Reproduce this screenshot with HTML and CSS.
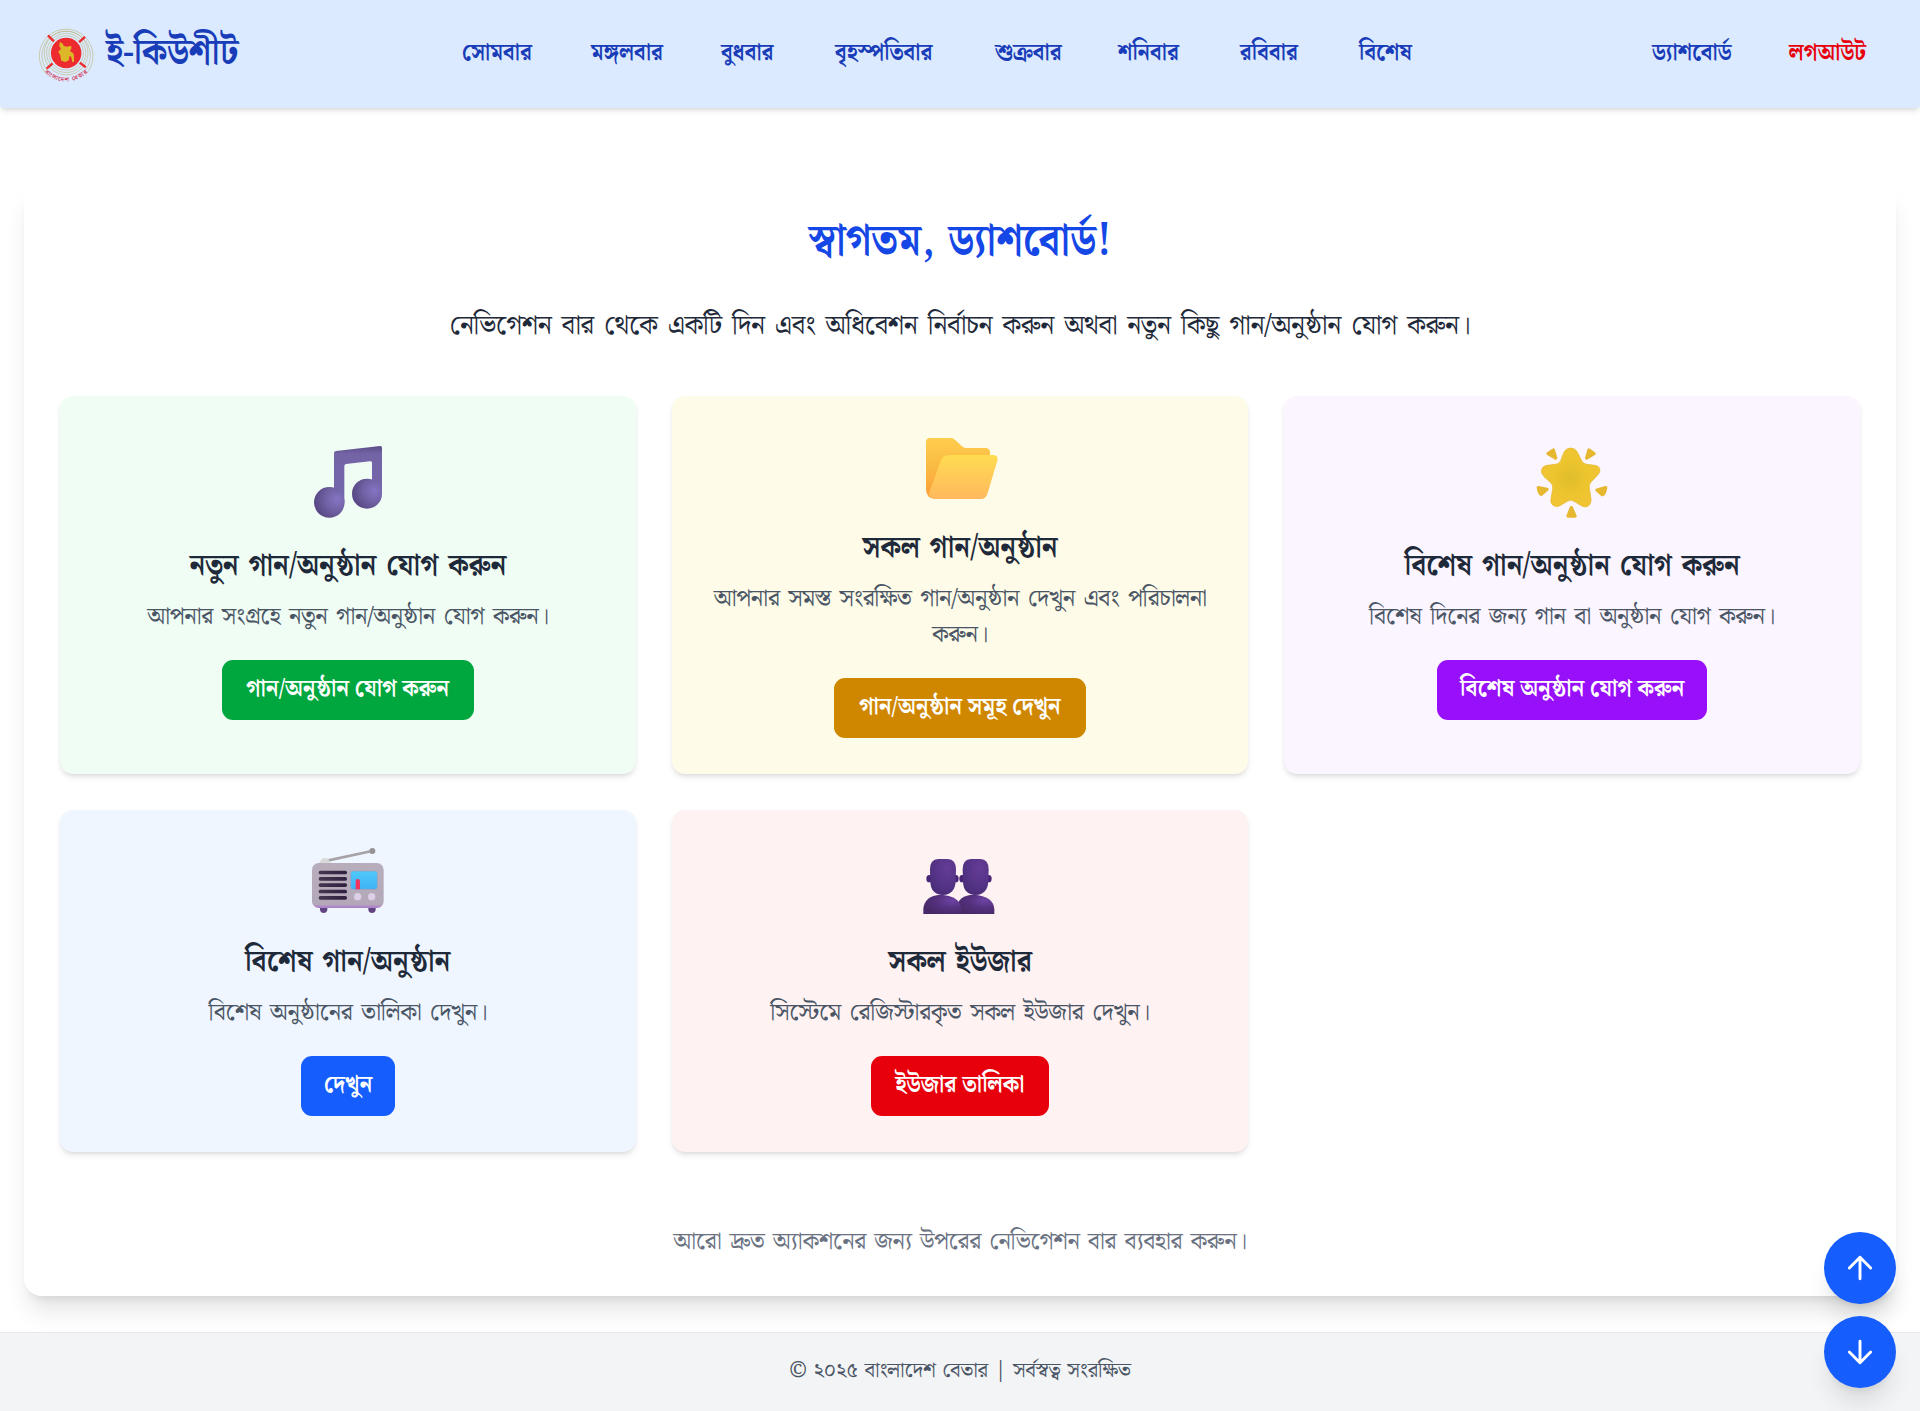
FILE: index.html
```html
<!DOCTYPE html>
<html lang="bn">
<head>
<meta charset="utf-8">
<title>ই-কিউশীট</title>
<link rel="stylesheet" href="styles.css">
</head>
<body>
<header class="navbar">
  <a class="brand">
    <svg class="brand-logo" viewBox="54 44 172 180" width="57" height="60">
      <g fill="none" stroke="#b9b274" stroke-width="1.7">
        <path d="M76 191A81 81 0 1 1 202 191"/>
        <path d="M82 184A73 73 0 1 1 196 184"/>
        <circle cx="139" cy="131" r="66"/><circle cx="139" cy="131" r="59"/><circle cx="139" cy="131" r="52"/>
      </g>
      <g stroke="#ed2a2e" stroke-width="7"><path d="M84 78l18 18M196 82l-18 16M80 178l18-16M198 174l-18-14"/></g>
      <circle cx="139" cy="131" r="46" fill="#ed2a2e"/>
      <path fill="#dcb728" d="M120 98l8 4 4 8 10 2 12-3 1 8-5 8 7 4 5 6 1 22-5 3-4-18-5-2-2 13-10 5-13-4-3-17-6-10 8-8-5-10z"/>
      <path id="logoArc" d="M74 190Q138 246 206 188" fill="none"/>
      <text class="logo-text"><textPath href="#logoArc" textLength="144">বাংলাদেশ বেতার</textPath></text>
    </svg>
    <span class="brand-name">ই-কিউশীট</span>
  </a>
  <nav class="days">
    <a>সোমবার</a><a>মঙ্গলবার</a><a>বুধবার</a><a>বৃহস্পতিবার</a><a>শুক্রবার</a><a>শনিবার</a><a>রবিবার</a><a>বিশেষ</a>
  </nav>
  <nav class="account"><a>ড্যাশবোর্ড</a><a class="logout">লগআউট</a></nav>
</header>

<main class="panel">
  <h1 class="title">স্বাগতম, ড্যাশবোর্ড!</h1>
  <p class="lead">নেভিগেশন বার থেকে একটি দিন এবং অধিবেশন নির্বাচন করুন অথবা নতুন কিছু গান/অনুষ্ঠান যোগ করুন।</p>
  <div class="cards">
    <section class="card green">
      <svg class="icon" viewBox="66 78 216 216">
        <defs>
          <radialGradient id="note" cx=".75" cy=".4" r=".7"><stop offset="0" stop-color="#8574c4"/><stop offset=".55" stop-color="#6f61a3"/><stop offset="1" stop-color="#5b4a87"/></radialGradient>
          <linearGradient id="beam" x1="0" y1="0" x2="0" y2="1"><stop offset="0" stop-color="#5d4c88"/><stop offset=".14" stop-color="#7364a6"/><stop offset="1" stop-color="#7467ab"/></linearGradient>
        </defs>
        <path fill="url(#beam)" d="M132 99Q132 94 138 93L270 78Q276 77 276 84V224H246V128Q246 123 240 124L168 132Q163 133 163 138V248H132Z"/>
        <ellipse cx="118" cy="247" rx="46" ry="46" fill="url(#note)"/>
        <ellipse cx="231" cy="221" rx="45" ry="45" fill="url(#note)"/>
      </svg>
      <h2>নতুন গান/অনুষ্ঠান যোগ করুন</h2>
      <p>আপনার সংগ্রহে নতুন গান/অনুষ্ঠান যোগ করুন।</p>
      <a class="btn"><span>গান/অনুষ্ঠান যোগ করুন</span></a>
    </section>
    <section class="card yellow">
      <svg class="icon" viewBox="72 24 216 216">
        <defs>
          <linearGradient id="back" x1="0" y1="0" x2="0" y2="1"><stop offset="0" stop-color="#ffcd4e"/><stop offset=".5" stop-color="#f9b942"/><stop offset="1" stop-color="#ff9c38"/></linearGradient>
          <linearGradient id="front" x1="0" y1="0" x2="0" y2="1"><stop offset="0" stop-color="#ffdb50"/><stop offset="1" stop-color="#ffb95e"/></linearGradient>
        </defs>
        <path fill="url(#back)" d="M78 66Q78 54 90 54H152Q160 54 165 59L186 79Q191 84 198 84H256Q270 84 270 98V150L110 237Q78 237 78 208Z"/>
        <path fill="url(#front)" d="M122 124Q128 105 148 105H280Q296 106 292 122L262 222Q257 237 243 237H108Q92 237 86 222Z"/>
      </svg>
      <h2>সকল গান/অনুষ্ঠান</h2>
      <p>আপনার সমস্ত সংরক্ষিত গান/অনুষ্ঠান দেখুন এবং পরিচালনা<br>করুন।</p>
      <a class="btn"><span>গান/অনুষ্ঠান সমূহ দেখুন</span></a>
    </section>
    <section class="card purple">
      <svg class="icon" viewBox="78 48 216 216">
        <defs>
          <radialGradient id="star"><stop offset="0" stop-color="#dfbd2c"/><stop offset=".6" stop-color="#edc52e"/><stop offset="1" stop-color="#f0c433"/></radialGradient>
          <linearGradient id="ray" x1="0" y1="0" x2="0" y2="1"><stop offset="0" stop-color="#f0c838"/><stop offset="1" stop-color="#e0ab29"/></linearGradient>
        </defs>
        <path fill="url(#star)" stroke="#e5b62c" stroke-width="2" stroke-linejoin="round" d="M162 66Q169 54 182 54Q195 54 202 66L215 92Q220 102 231 103L254 106Q269 108 270 121Q269 131 260 139L244 155Q236 163 238 173L243 207Q244 224 231 230Q223 232 214 227L192 214Q182 208 172 214L150 227Q139 233 129 226Q120 219 123 206L128 176Q130 165 122 158L102 140Q93 131 94 121Q97 108 111 106L136 103Q147 102 152 92Z"/>
        <g fill="url(#ray)" stroke="#e6b830" stroke-width="10" stroke-linejoin="round"><path d="M114 71L130 60L137 84Z"/><path d="M237 60L252 71L230 84Z"/><path d="M85 173L111 178L94 193Q88 191 85 173Z"/><path d="M287 173L261 180L277 194Q284 191 287 173Z"/><path d="M184 233L195 258H174Z"/></g>
      </svg>
      <h2>বিশেষ গান/অনুষ্ঠান যোগ করুন</h2>
      <p>বিশেষ দিনের জন্য গান বা অনুষ্ঠান যোগ করুন।</p>
      <a class="btn"><span>বিশেষ অনুষ্ঠান যোগ করুন</span></a>
    </section>
    <section class="card blue">
      <svg class="icon" viewBox="66 36 216 216">
        <defs>
          <linearGradient id="body" x1="0" y1="0" x2="0" y2="1"><stop offset="0" stop-color="#b8aebb"/><stop offset=".93" stop-color="#b3a8b8"/><stop offset=".95" stop-color="#b48dca"/><stop offset="1" stop-color="#a881c1"/></linearGradient>
          <linearGradient id="screen" x1="0" y1="0" x2="0" y2="1"><stop offset="0" stop-color="#4fc9fb"/><stop offset="1" stop-color="#3eb2f5"/></linearGradient>
          <linearGradient id="slot"><stop offset="0" stop-color="#43364f"/><stop offset="1" stop-color="#2d203e"/></linearGradient>
        </defs>
        <path d="M112 92L246 63" stroke="#a6a2a6" stroke-width="8"/><circle cx="247" cy="63" r="9" fill="#979297"/>
        <path d="M88 101Q92 84 105 84Q118 84 122 101Z" fill="#d8d9d8"/>
        <path d="M90 232h22v8q-2 9-11 9t-11-9zM235 232h22v8q-2 9-11 9t-11-9z" fill="#634483"/>
        <rect x="66" y="99" width="215" height="135" rx="20" fill="url(#body)"/>
        <g fill="url(#slot)"><rect x="86" y="122" width="85" height="11" rx="5"/><rect x="86" y="141" width="85" height="11" rx="5"/><rect x="86" y="160" width="85" height="11" rx="5"/><rect x="86" y="179" width="85" height="11" rx="5"/><rect x="86" y="198" width="85" height="11" rx="5"/></g>
        <rect x="182" y="123" width="80" height="55" rx="8" fill="url(#screen)" stroke="#9a9fbe" stroke-width="2"/>
        <path d="M197 178V153Q197 147 203 147T210 153V178Z" fill="#f5315f"/>
        <circle cx="203" cy="200" r="11" fill="#dccfe8"/><circle cx="245" cy="200" r="11" fill="#dccfe8"/>
      </svg>
      <h2>বিশেষ গান/অনুষ্ঠান</h2>
      <p>বিশেষ অনুষ্ঠানের তালিকা দেখুন।</p>
      <a class="btn"><span>দেখুন</span></a>
    </section>
    <section class="card red">
      <svg class="icon" viewBox="71 6 216 216">
        <defs>
          <radialGradient id="head" cx=".65" cy=".25" r=".8"><stop offset="0" stop-color="#653b96"/><stop offset=".6" stop-color="#553487"/><stop offset="1" stop-color="#492c78"/></radialGradient>
          <radialGradient id="torso" cx=".75" cy=".3" r=".8"><stop offset="0" stop-color="#6e43a4"/><stop offset=".5" stop-color="#55317f"/><stop offset="1" stop-color="#482967"/></radialGradient>
        </defs>
        <path d="M168 222V206Q174 164 220 164Q280 168 282 208V222Z" fill="url(#torso)"/>
        <path d="M69 222V206Q73 167 120 164Q178 166 184 208V222Z" fill="url(#torso)"/>
        <g fill="#472475"><ellipse cx="87" cy="116" rx="9" ry="11"/><ellipse cx="167" cy="116" rx="8" ry="11"/><ellipse cx="185" cy="116" rx="8" ry="11"/><ellipse cx="265" cy="116" rx="9" ry="11"/></g>
        <path id="person" fill="url(#head)" d="M89 88Q89 58 114 57H142Q167 58 167 88L166 124Q164 164 128 165Q92 164 90 126Z"/>
        <use href="#person" x="98"/>
      </svg>
      <h2>সকল ইউজার</h2>
      <p>সিস্টেমে রেজিস্টারকৃত সকল ইউজার দেখুন।</p>
      <a class="btn"><span>ইউজার তালিকা</span></a>
    </section>
  </div>
  <p class="hint">আরো দ্রুত অ্যাকশনের জন্য উপরের নেভিগেশন বার ব্যবহার করুন।</p>
</main>

<footer class="footer">© ২০২৫ বাংলাদেশ বেতার | সর্বস্বত্ব সংরক্ষিত</footer>

<div class="scrollers">
  <button class="scroll-btn" aria-label="উপরে"><svg viewBox="0 0 24 24"><path d="M12 20V4M4 12l8-8 8 8"/></svg></button>
  <button class="scroll-btn" aria-label="নিচে"><svg viewBox="0 0 24 24"><path d="M12 4v16M4 12l8 8 8-8"/></svg></button>
</div>
</body>
</html>
```
FILE: styles.css
```css
* { box-sizing: border-box; margin: 0; padding: 0; }
body {
  font-family: "Noto Serif Bengali", "Kalpurush", "SolaimanLipi", "Noto Sans Bengali", "Liberation Serif", serif;
  font-size: 24px;
  background: #fff;
  color: #1e2939;
  min-height: 1411px;
  display: flex;
  flex-direction: column;
}
.navbar {
  height: 108px;
  background: #dbeafe;
  color: #193cb8;
  border-radius: 0 0 4px 4px;
  box-shadow: 0 4px 6px -1px rgba(0,0,0,.1), 0 2px 4px -2px rgba(0,0,0,.1);
  display: flex;
  align-items: center;
  justify-content: space-between;
  padding: 0 54px 0 38px;
  font-weight: 700;
  white-space: nowrap;
}
.brand { display: flex; align-items: center; gap: 11px; width: 424px; }
.brand-logo { overflow: visible; }
.brand-name { font-size: 36px; line-height: 60px; transform: scaleX(.94); transform-origin: left; }
.logo-text { font-size: 19px; fill: #d3405c; }
.days, .account { padding-bottom: 2px; }
.days { display: grid; grid-template-columns: 129px 130px 114px 160px 123px 122px 119px auto; flex: 1; }
.account { display: grid; grid-template-columns: 137px 77px; }
.days a, .account a { transform: scaleX(.9); transform-origin: left; }
.logout { color: #e7000b; }
.panel {
  margin: 72px 24px 36px;
  height: 1116px;
  padding: 36px;
  border-radius: 18px;
  box-shadow: 0 20px 25px -5px rgba(0,0,0,.1), 0 8px 10px -6px rgba(0,0,0,.1);
  text-align: center;
  white-space: nowrap;
}
.title { font-size: 45px; line-height: 52px; color: #1447e6; word-spacing: 4px; transform: scaleX(.89); }
.lead { font-size: 27px; line-height: 42px; margin: 38px 0 48px; letter-spacing: -.6px; word-spacing: 4px; }
.cards { display: grid; grid-template-columns: repeat(3, 1fr); grid-template-rows: 378px 342px; gap: 36px; }
.card {
  border-radius: 13px;
  box-shadow: 0 4px 6px -1px rgba(0,0,0,.1), 0 2px 4px -2px rgba(0,0,0,.1);
  display: flex;
  flex-direction: column;
  align-items: center;
  justify-content: center;
}
.icon { width: 72px; height: 72px; margin-top: -4px; overflow: visible; }
.card h2 { font-size: 30px; line-height: 40px; margin: 28px 0 13px; word-spacing: 3px; transform: scaleX(.92); }
.card p { font-size: 24px; line-height: 36px; color: #4a5565; margin-bottom: 25px; letter-spacing: -.6px; word-spacing: 3.2px; }
.btn {
  width: 252px;
  height: 60px;
  line-height: 58px;
  border-radius: 11px;
  color: #fff;
  font-weight: 700;
  display: flex;
  justify-content: center;
}
.btn span { transform: scaleX(.925); }
.green { background: #f0fdf4; }
.green .btn { background: #00a63e; }
.yellow { background: #fefce8; }
.yellow .btn { background: #d08700; }
.purple { background: #faf5ff; }
.purple .btn { width: 270px; background: #9810fa; }
.blue { background: #eff6ff; }
.blue .btn { width: 94px; background: #155dfc; }
.red { background: #fef2f2; }
.red .btn { width: 178px; background: #e7000b; }
.hint { margin-top: 72px; line-height: 36px; color: #6a7282; letter-spacing: -.6px; word-spacing: 2.8px; }
.footer {
  height: 79px;
  background: #f3f4f6;
  border-top: 1px solid #e5e7eb;
  color: #4a5565;
  font-size: 21px;
  line-height: 77px;
  text-align: center;
  letter-spacing: -.4px;
  word-spacing: 1.8px;
}
.scrollers { position: fixed; right: 24px; bottom: 23px; display: flex; flex-direction: column; gap: 12px; }
.scroll-btn {
  width: 72px;
  height: 72px;
  border: 0;
  border-radius: 50%;
  background: #155dfc;
  box-shadow: 0 20px 25px -5px rgba(0,0,0,.1), 0 8px 10px -6px rgba(0,0,0,.1);
  display: grid;
  place-items: center;
}
.scroll-btn svg { width: 32px; height: 32px; fill: none; stroke: #fff; stroke-width: 2.2; stroke-linecap: round; stroke-linejoin: round; }
```
